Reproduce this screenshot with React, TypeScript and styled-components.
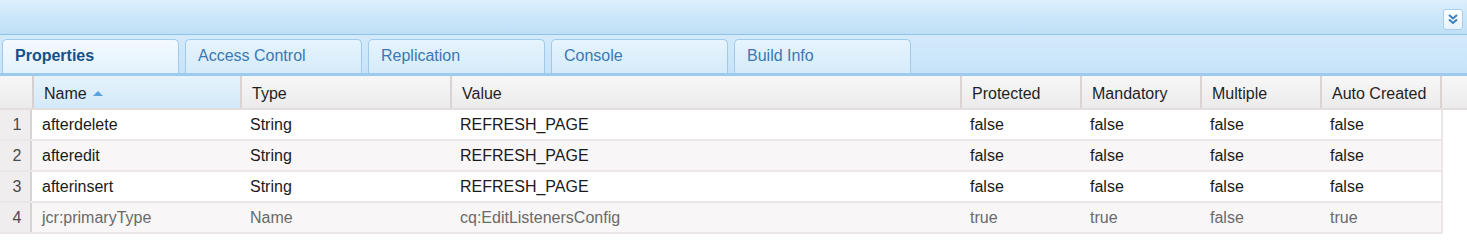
import styled, { createGlobalStyle } from 'styled-components';

interface Prop {
  name: string;
  type: string;
  value: string;
  protectedFlag: boolean;
  mandatory: boolean;
  multiple: boolean;
  autoCreated: boolean;
}

const props: Prop[] = [
  { name: 'afterdelete', type: 'String', value: 'REFRESH_PAGE', protectedFlag: false, mandatory: false, multiple: false, autoCreated: false },
  { name: 'afteredit', type: 'String', value: 'REFRESH_PAGE', protectedFlag: false, mandatory: false, multiple: false, autoCreated: false },
  { name: 'afterinsert', type: 'String', value: 'REFRESH_PAGE', protectedFlag: false, mandatory: false, multiple: false, autoCreated: false },
  { name: 'jcr:primaryType', type: 'Name', value: 'cq:EditListenersConfig', protectedFlag: true, mandatory: true, multiple: false, autoCreated: true },
];

const tabs = ['Properties', 'Access Control', 'Replication', 'Console', 'Build Info'];

const columns = [
  { label: 'Name', width: 208 },
  { label: 'Type', width: 210 },
  { label: 'Value', width: 510 },
  { label: 'Protected', width: 120 },
  { label: 'Mandatory', width: 120 },
  { label: 'Multiple', width: 120 },
  { label: 'Auto Created', width: 120 },
];

const GlobalStyle = createGlobalStyle`
  body {
    margin: 0;
    background: #fff;
    font-family: "Liberation Sans", Arial, sans-serif;
  }
`;

const App = () => {
  return (
    <Panel>
      <GlobalStyle />
      <TopBar>
        <CollapseBtn>
          <svg width="12" height="12" viewBox="0 0 12 12">
            <path d="M2 2 L6 5.5 L10 2 M2 6.5 L6 10 L10 6.5" fill="none" stroke="#3d7fc0" strokeWidth="2" />
          </svg>
        </CollapseBtn>
      </TopBar>
      <TabStrip>
        {tabs.map((t, i) => (
          <Tab key={t} $active={i === 0}>
            {t}
          </Tab>
        ))}
      </TabStrip>
      <Grid>
        <HeaderRow>
          <RowNumHead />
          {columns.map((c, i) => (
            <HeadCell key={c.label} $w={c.width} $sorted={i === 0}>
              {c.label}
              {i === 0 && <SortArrow />}
            </HeadCell>
          ))}
          <HeadFiller />
        </HeaderRow>
        {props.map((p, i) => {
          const vals = [
            p.name,
            p.type,
            p.value,
            String(p.protectedFlag),
            String(p.mandatory),
            String(p.multiple),
            String(p.autoCreated),
          ];
          return (
            <Row key={p.name} $alt={i % 2 === 1} $muted={p.protectedFlag}>
              <RowNum>{i + 1}</RowNum>
              {vals.map((v, j) => (
                <Cell key={j} $w={columns[j].width}>
                  {v}
                </Cell>
              ))}
            </Row>
          );
        })}
      </Grid>
    </Panel>
  );
};

const Panel = styled.div`
  width: 1467px;
  height: 246px;
  overflow: hidden;
  background: #fff;
`;

const TopBar = styled.div`
  height: 35px;
  display: flex;
  justify-content: flex-end;
  align-items: center;
  padding-right: 4px;
  box-sizing: border-box;
  background: linear-gradient(#ddeffc 0%, #cde7fa 45%, #bfdff7 100%);
  border-bottom: 1px solid #8fc3ea;
`;

const CollapseBtn = styled.div`
  width: 20px;
  height: 21px;
  margin-top: 4px;
  box-sizing: border-box;
  display: flex;
  align-items: center;
  justify-content: center;
  border: 1px solid #a9cfea;
  border-radius: 3px;
  background: linear-gradient(#ffffff, #e6f2fb);
`;

const TabStrip = styled.div`
  height: 41px;
  box-sizing: border-box;
  display: flex;
  align-items: flex-end;
  gap: 6px;
  padding: 0 0 0 2px;
  background: linear-gradient(#d3eafb, #c7e3f8);
  border-bottom: 3px solid #9ccbee;
`;

const Tab = styled.div<{ $active: boolean }>`
  width: 177px;
  height: 34px;
  box-sizing: border-box;
  padding: 7px 0 0 12px;
  border: 1px solid #9fcaeb;
  border-bottom: none;
  border-radius: 5px 5px 0 0;
  font-size: 16px;
  font-weight: ${(p) => (p.$active ? 700 : 400)};
  color: ${(p) => (p.$active ? '#15508a' : '#3a78b3')};
  background: ${(p) =>
    p.$active
      ? 'linear-gradient(#f4faff, #e3f2fc)'
      : 'linear-gradient(#e6f4fd, #d5ebfa)'};
`;

const Grid = styled.div`
  display: flex;
  flex-direction: column;
`;

const HeaderRow = styled.div`
  display: flex;
  height: 34px;
  box-sizing: border-box;
  border-bottom: 2px solid #e3dddd;
  background: linear-gradient(#f8f7f7, #ecebeb);
`;

const RowNumHead = styled.div`
  width: 32px;
  flex: none;
  border-right: 2px solid #d7d0d0;
`;

const HeadCell = styled.div<{ $w: number; $sorted: boolean }>`
  width: ${(p) => p.$w}px;
  flex: none;
  box-sizing: border-box;
  display: flex;
  align-items: center;
  gap: 6px;
  padding: 3px 0 0 10px;
  font-size: 16px;
  color: #1f1f1f;
  border-right: 2px solid #dbd2d2;
  background: ${(p) => (p.$sorted ? 'linear-gradient(#e6f3fc, #d3e9f9)' : 'transparent')};
`;

const SortArrow = styled.span`
  width: 0;
  height: 0;
  border-left: 5px solid transparent;
  border-right: 5px solid transparent;
  border-bottom: 5px solid #5aa2dc;
`;

const HeadFiller = styled.div`
  flex: 1;
`;

const Row = styled.div<{ $alt: boolean; $muted: boolean }>`
  display: flex;
  width: 1443px;
  height: 31px;
  box-sizing: border-box;
  border-bottom: 2px solid #ebe7e7;
  border-right: 2px solid #ebe7e7;
  background: ${(p) => (p.$alt ? '#f8f6f6' : '#ffffff')};
  color: ${(p) => (p.$muted ? '#6a6a6a' : '#1a1a1a')};
  font-size: 16px;
`;

const RowNum = styled.div`
  width: 32px;
  flex: none;
  display: flex;
  align-items: center;
  justify-content: center;
  padding-left: 4px;
  box-sizing: border-box;
  background: #efeded;
  border-right: 2px solid #d8d3d3;
  color: #4a4a4a;
`;

const Cell = styled.div<{ $w: number }>`
  width: ${(p) => p.$w}px;
  flex: none;
  box-sizing: border-box;
  display: flex;
  align-items: center;
  padding-left: 10px;
  white-space: nowrap;
`;

export default App;
